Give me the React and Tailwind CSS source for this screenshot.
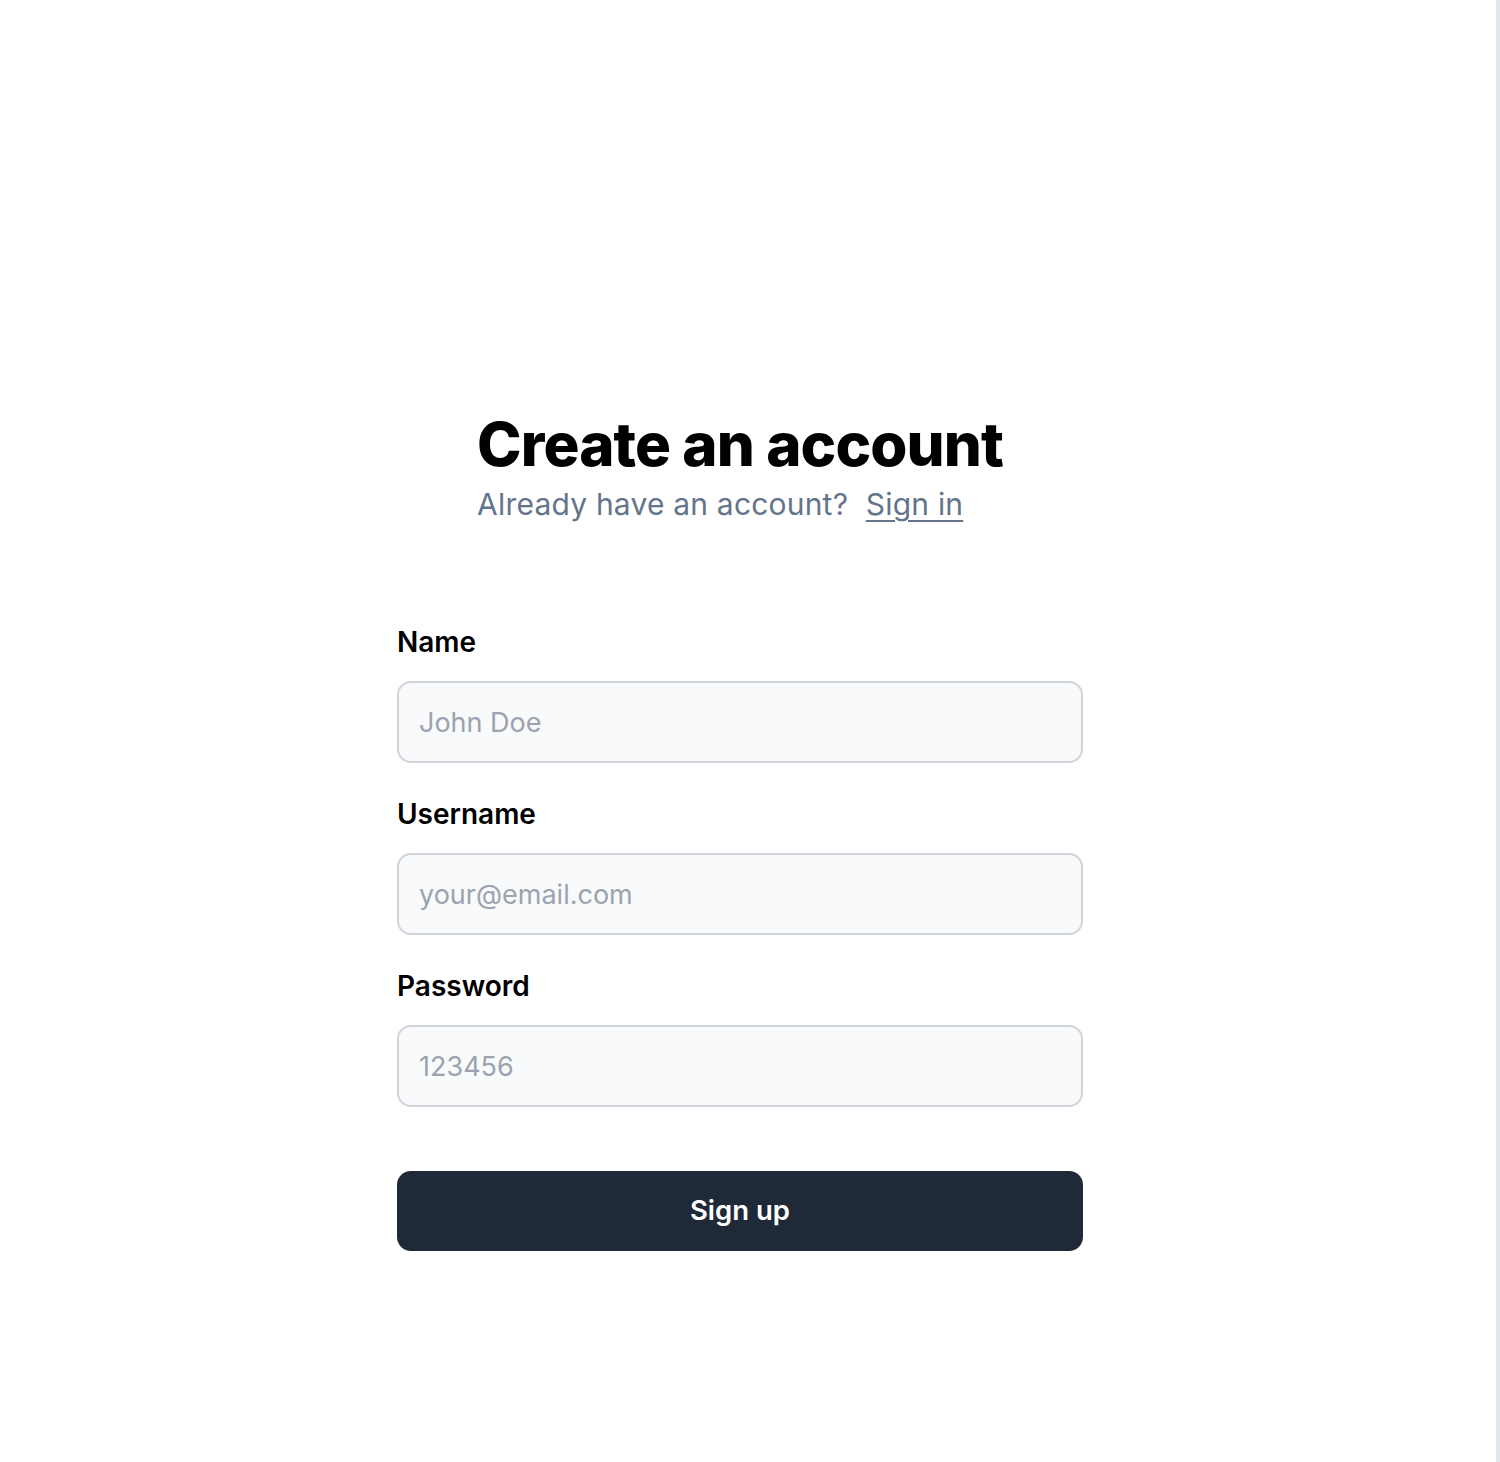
import React from 'react'

const Field = ({ label, placeholder, type = 'text' }) => (
  <div className="flex flex-col">
    <label className="text-[28px] leading-[36px] font-semibold text-black">{label}</label>
    <input
      type={type}
      placeholder={placeholder}
      className="mt-[21px] h-[82px] w-full rounded-[14px] border-2 border-[#d1d5db] bg-[#f8fafc] px-[20px] text-[27px] text-gray-900 placeholder:text-[#9ca3af] outline-none"
    />
  </div>
)

export default function App() {
  return (
    <div className="flex min-h-[1462px] bg-white" style={{ fontFamily: 'Inter, "Noto Sans", sans-serif' }}>
      <main className="flex flex-1 flex-col items-center pt-[408px]">
        <div className="flex flex-col">
          <h1 className="text-[60px] leading-[72px] font-extrabold tracking-[-0.9px] text-black">Create an account</h1>
          <p className="mt-[4px] text-[30px] leading-[40px] tracking-[0.2px] text-[#64748b]">
            Already have an account?{' '}
            <a href="#" className="ml-[9px] underline underline-offset-[5px] decoration-2">Sign in</a>
          </p>
        </div>

        <form className="mt-[100px] flex w-[686px] flex-col gap-[33px]" onSubmit={e => e.preventDefault()}>
          <Field label="Name" placeholder="John Doe" />
          <Field label="Username" placeholder="your@email.com" />
          <Field label="Password" placeholder="123456" type="password" />
          <button
            type="submit"
            className="mt-[31px] h-[80px] w-full rounded-[14px] bg-[#1f2937] text-[27.5px] font-semibold text-white"
          >
            Sign up
          </button>
        </form>
      </main>
      <div className="w-4" />
      <div className="w-1 bg-[#e2e8f0]" />
    </div>
  )
}
